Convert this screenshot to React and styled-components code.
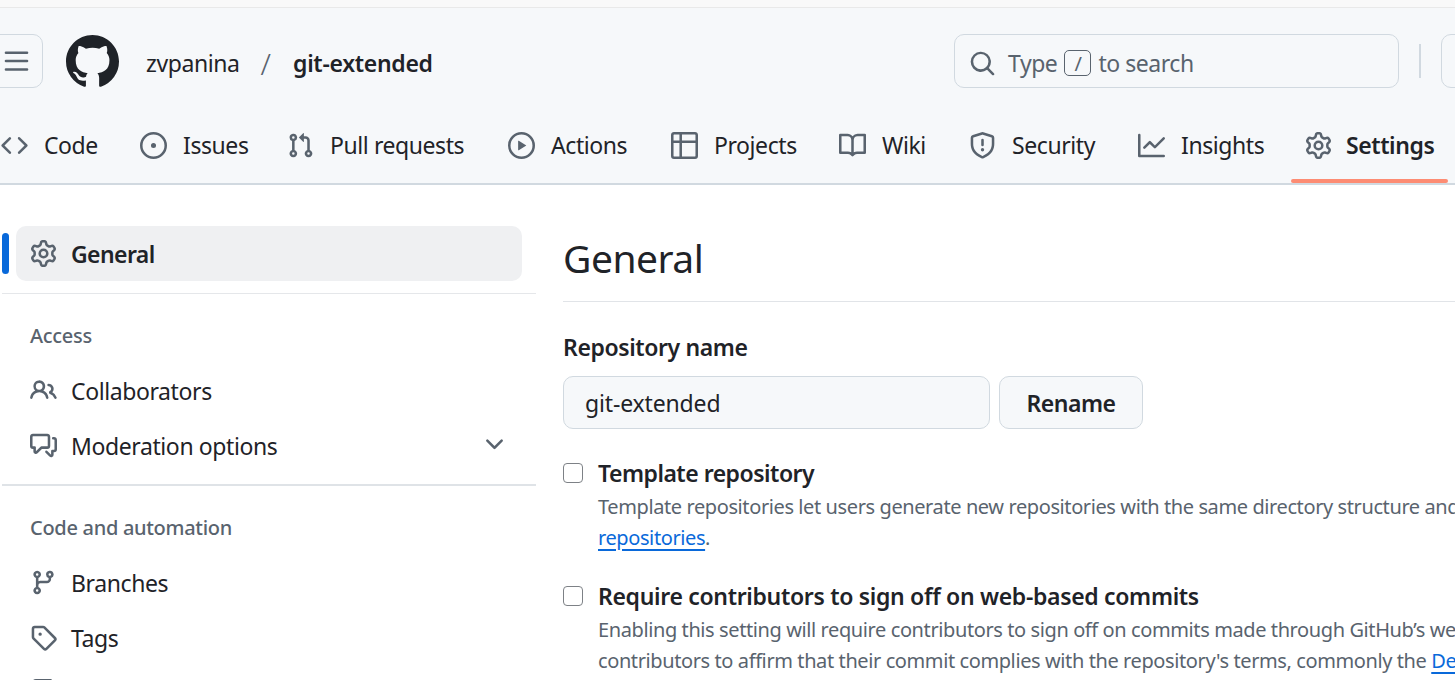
import React from "react";
import styled, { createGlobalStyle } from "styled-components";

const GlobalStyle = createGlobalStyle`
  html, body {
    margin: 0;
    padding: 0;
    background: #fff;
    overflow: hidden;
  }
  body {
    font-family: "Noto Sans", "Open Sans", sans-serif;
    color: #1f2328;
  }
`;

const paths = {
  menu: "M1 2.75A.75.75 0 0 1 1.75 2h12.5a.75.75 0 0 1 0 1.5H1.75A.75.75 0 0 1 1 2.75Zm0 5A.75.75 0 0 1 1.75 7h12.5a.75.75 0 0 1 0 1.5H1.75A.75.75 0 0 1 1 7.75ZM1.75 12h12.5a.75.75 0 0 1 0 1.5H1.75a.75.75 0 0 1 0-1.5Z",
  mark: "M8 0c4.42 0 8 3.58 8 8a8.013 8.013 0 0 1-5.45 7.59c-.4.08-.55-.17-.55-.38 0-.27.01-1.13.01-2.2 0-.75-.25-1.23-.54-1.48 1.78-.2 3.65-.88 3.65-3.95 0-.88-.31-1.59-.82-2.15.08-.2.36-1.02-.08-2.12 0 0-.67-.22-2.2.82-.64-.18-1.32-.27-2-.27-.68 0-1.36.09-2 .27-1.53-1.03-2.2-.82-2.2-.82-.44 1.1-.16 1.92-.08 2.12-.51.56-.82 1.28-.82 2.15 0 3.06 1.86 3.75 3.64 3.95-.23.2-.44.55-.51 1.07-.46.21-1.61.55-2.33-.66-.15-.24-.6-.83-1.23-.82-.67.01-.27.38.01.53.34.19.73.9.82 1.13.16.45.68 1.31 2.69.94 0 .67.01 1.3.01 1.49 0 .21-.15.45-.55.38A7.995 7.995 0 0 1 0 8c0-4.42 3.58-8 8-8Z",
  search: "M10.68 11.74a6 6 0 0 1-7.922-8.982 6 6 0 0 1 8.982 7.922l3.04 3.04a.749.749 0 0 1-.326 1.275.749.749 0 0 1-.734-.215ZM11.5 7a4.499 4.499 0 1 0-8.997 0A4.499 4.499 0 0 0 11.5 7Z",
  code: "m11.28 3.22 4.25 4.25a.75.75 0 0 1 0 1.06l-4.25 4.25a.749.749 0 0 1-1.275-.326.749.749 0 0 1 .215-.734L13.94 8l-3.72-3.72a.749.749 0 0 1 .326-1.275.749.749 0 0 1 .734.215Zm-6.56 0a.751.751 0 0 1 1.042.018.751.751 0 0 1 .018 1.042L2.06 8l3.72 3.72a.749.749 0 0 1-.326 1.275.749.749 0 0 1-.734-.215L.47 8.53a.75.75 0 0 1 0-1.06Z",
  issue: "M8 9.5a1.5 1.5 0 1 0 0-3 1.5 1.5 0 0 0 0 3ZM8 0a8 8 0 1 1 0 16A8 8 0 0 1 8 0ZM1.5 8a6.5 6.5 0 1 0 13 0 6.5 6.5 0 0 0-13 0Z",
  pull: "M1.5 3.25a2.25 2.25 0 1 1 3 2.122v5.256a2.251 2.251 0 1 1-1.5 0V5.372A2.25 2.25 0 0 1 1.5 3.25Zm5.677-.177L9.573.677A.25.25 0 0 1 10 .854V2.5h1A2.5 2.5 0 0 1 13.5 5v5.628a2.251 2.251 0 1 1-1.5 0V5a1 1 0 0 0-1-1h-1v1.646a.25.25 0 0 1-.427.177L7.177 3.427a.25.25 0 0 1 0-.354ZM3.75 2.5a.75.75 0 1 0 0 1.5.75.75 0 0 0 0-1.5Zm0 9.5a.75.75 0 1 0 0 1.5.75.75 0 0 0 0-1.5Zm8.25.75a.75.75 0 1 0 1.5 0 .75.75 0 0 0-1.5 0Z",
  play: "M8 0a8 8 0 1 1 0 16A8 8 0 0 1 8 0ZM1.5 8a6.5 6.5 0 1 0 13 0 6.5 6.5 0 0 0-13 0Zm4.879-2.773 4.264 2.559a.25.25 0 0 1 0 .428l-4.264 2.559A.25.25 0 0 1 6 10.559V5.442a.25.25 0 0 1 .379-.215Z",
  table: "M0 1.75C0 .784.784 0 1.75 0h12.5C15.216 0 16 .784 16 1.75v12.5A1.75 1.75 0 0 1 14.25 16H1.75A1.75 1.75 0 0 1 0 14.25ZM6.5 6.5v8h7.75a.25.25 0 0 0 .25-.25V6.5Zm8-1.5V1.75a.25.25 0 0 0-.25-.25H6.5V5Zm-13 1.5v7.75c0 .138.112.25.25.25H5v-8ZM5 5V1.5H1.75a.25.25 0 0 0-.25.25V5Z",
  book: "M0 1.75A.75.75 0 0 1 .75 1h4.253c1.227 0 2.317.59 3 1.501A3.743 3.743 0 0 1 11.006 1h4.245a.75.75 0 0 1 .75.75v10.5a.75.75 0 0 1-.75.75h-4.507a2.25 2.25 0 0 0-1.591.659l-.622.621a.75.75 0 0 1-1.06 0l-.622-.621A2.25 2.25 0 0 0 5.258 13H.75a.75.75 0 0 1-.75-.75Zm7.251 10.324.004-5.073-.002-2.253A2.25 2.25 0 0 0 5.003 2.5H1.5v9h3.757a3.75 3.75 0 0 1 1.994.574ZM8.755 4.75l-.004 7.322a3.752 3.752 0 0 1 1.992-.572H14.5v-9h-3.495a2.25 2.25 0 0 0-2.25 2.25Z",
  shield: "M7.467.133a1.748 1.748 0 0 1 1.066 0l5.25 1.68A1.75 1.75 0 0 1 15 3.48V7c0 1.566-.32 3.182-1.303 4.682-.983 1.498-2.585 2.813-5.032 3.855a1.697 1.697 0 0 1-1.33 0c-2.447-1.042-4.049-2.357-5.032-3.855C1.32 10.182 1 8.566 1 7V3.48a1.75 1.75 0 0 1 1.217-1.667Zm.61 1.429a.25.25 0 0 0-.153 0l-5.25 1.68a.25.25 0 0 0-.174.238V7c0 1.358.275 2.666 1.057 3.86.784 1.194 2.121 2.34 4.366 3.297a.196.196 0 0 0 .154 0c2.245-.956 3.582-2.104 4.366-3.298C13.225 9.666 13.5 8.36 13.5 7V3.48a.251.251 0 0 0-.174-.237l-5.25-1.68ZM8.75 4.75v3a.75.75 0 0 1-1.5 0v-3a.75.75 0 0 1 1.5 0ZM9 10.5a1 1 0 1 1-2 0 1 1 0 0 1 2 0Z",
  graph: "M1.5 1.75V13.5h13.75a.75.75 0 0 1 0 1.5H.75a.75.75 0 0 1-.75-.75V1.75a.75.75 0 0 1 1.5 0Zm14.28 2.53-5.25 5.25a.75.75 0 0 1-1.06 0L7 7.06 4.28 9.78a.751.751 0 0 1-1.042-.018.751.751 0 0 1-.018-1.042l3.25-3.25a.75.75 0 0 1 1.06 0L10 7.94l4.72-4.72a.751.751 0 0 1 1.042.018.751.751 0 0 1 .018 1.042Z",
  gear: "M8 0a8.2 8.2 0 0 1 .701.031C9.444.095 9.99.645 10.16 1.29l.288 1.107c.018.066.079.158.212.224.231.114.454.243.668.386.123.082.233.09.299.071l1.103-.303c.644-.176 1.392.021 1.82.63.27.385.506.792.704 1.218.315.675.111 1.422-.364 1.891l-.814.806c-.049.048-.098.147-.088.294.016.257.016.515 0 .772-.01.147.038.246.088.294l.814.806c.475.469.679 1.216.364 1.891a7.977 7.977 0 0 1-.704 1.217c-.428.61-1.176.807-1.82.63l-1.102-.302c-.067-.019-.177-.011-.3.071a5.909 5.909 0 0 1-.668.386c-.133.066-.194.158-.211.224l-.29 1.106c-.168.646-.715 1.196-1.458 1.26a8.006 8.006 0 0 1-1.402 0c-.743-.064-1.289-.614-1.458-1.26l-.289-1.106c-.018-.066-.079-.158-.212-.224a5.738 5.738 0 0 1-.668-.386c-.123-.082-.233-.09-.299-.071l-1.103.303c-.644.176-1.392-.021-1.82-.63a8.12 8.12 0 0 1-.704-1.218c-.315-.675-.111-1.422.363-1.891l.815-.806c.05-.048.098-.147.088-.294a6.214 6.214 0 0 1 0-.772c.01-.147-.038-.246-.088-.294l-.815-.806C.635 6.045.431 5.298.746 4.623a7.92 7.92 0 0 1 .704-1.217c.428-.61 1.176-.807 1.82-.63l1.102.302c.067.019.177.011.3-.071.214-.143.437-.272.668-.386.133-.066.194-.158.211-.224l.29-1.106C6.009.645 6.556.095 7.299.03 7.53.01 7.764 0 8 0Zm-.571 1.525c-.036.003-.108.036-.137.146l-.289 1.105c-.147.561-.549.967-.998 1.189-.173.086-.34.183-.5.29-.417.278-.97.423-1.529.27l-1.103-.303c-.109-.03-.175.016-.195.045-.22.312-.412.644-.573.99-.014.031-.021.11.059.19l.815.806c.411.406.562.957.53 1.456a4.709 4.709 0 0 0 0 .582c.032.499-.119 1.05-.53 1.456l-.815.806c-.081.08-.073.159-.059.19.162.346.353.677.573.989.02.03.085.076.195.046l1.102-.303c.56-.153 1.113-.008 1.53.27.161.107.328.204.501.29.447.222.85.629.997 1.189l.289 1.105c.029.109.101.143.137.146a6.6 6.6 0 0 0 1.142 0c.036-.003.108-.036.137-.146l.289-1.105c.147-.561.549-.967.998-1.189.173-.086.34-.183.5-.29.417-.278.97-.423 1.529-.27l1.103.303c.109.029.175-.016.195-.045.22-.313.411-.644.573-.99.014-.031.021-.11-.059-.19l-.815-.806c-.411-.406-.562-.957-.53-1.456a4.709 4.709 0 0 0 0-.582c-.032-.499.119-1.05.53-1.456l.815-.806c.081-.08.073-.159.059-.19a6.464 6.464 0 0 0-.573-.989c-.02-.03-.085-.076-.195-.046l-1.102.303c-.56.153-1.113.008-1.53-.27a4.44 4.44 0 0 0-.501-.29c-.447-.222-.85-.629-.997-1.189l-.289-1.105c-.029-.11-.101-.143-.137-.146a6.6 6.6 0 0 0-1.142 0ZM11 8a3 3 0 1 1-6 0 3 3 0 0 1 6 0ZM9.5 8a1.5 1.5 0 1 0-3.001.001A1.5 1.5 0 0 0 9.5 8Z",
  people: "M2 5.5a3.5 3.5 0 1 1 5.898 2.549 5.508 5.508 0 0 1 3.034 4.084.75.75 0 1 1-1.482.235 4 4 0 0 0-7.9 0 .75.75 0 0 1-1.482-.236A5.507 5.507 0 0 1 3.102 8.05 3.493 3.493 0 0 1 2 5.5ZM11 4a3.001 3.001 0 0 1 2.22 5.018 5.01 5.01 0 0 1 2.56 3.012.749.749 0 0 1-.885.954.752.752 0 0 1-.549-.514 3.507 3.507 0 0 0-2.522-2.372.75.75 0 0 1-.574-.73v-.352a.75.75 0 0 1 .416-.672A1.5 1.5 0 0 0 11 5.5.75.75 0 0 1 11 4Zm-5.5-.5a2 2 0 1 0-.001 3.999A2 2 0 0 0 5.5 3.5Z",
  comments: "M1.75 1h8.5c.966 0 1.75.784 1.75 1.75v5.5A1.75 1.75 0 0 1 10.25 10H7.061l-2.574 2.573A1.458 1.458 0 0 1 2 11.543V10h-.25A1.75 1.75 0 0 1 0 8.25v-5.5C0 1.784.784 1 1.75 1ZM1.5 2.75v5.5c0 .138.112.25.25.25h1a.75.75 0 0 1 .75.75v2.19l2.72-2.72a.749.749 0 0 1 .53-.22h3.5a.25.25 0 0 0 .25-.25v-5.5a.25.25 0 0 0-.25-.25h-8.5a.25.25 0 0 0-.25.25Zm13 2a.25.25 0 0 0-.25-.25h-.5a.75.75 0 0 1 0-1.5h.5c.966 0 1.75.784 1.75 1.75v5.5A1.75 1.75 0 0 1 14.25 12H14v1.543a1.458 1.458 0 0 1-2.487 1.03L9.22 12.28a.749.749 0 0 1 .326-1.275.749.749 0 0 1 .734.215l2.22 2.22v-2.19a.75.75 0 0 1 .75-.75h1a.25.25 0 0 0 .25-.25Z",
  chevron: "M12.78 5.22a.749.749 0 0 1 0 1.06l-4.25 4.25a.749.749 0 0 1-1.06 0L3.22 6.28a.749.749 0 1 1 1.06-1.06L8 8.939l3.72-3.719a.749.749 0 0 1 1.06 0Z",
  branch: "M9.5 3.25a2.25 2.25 0 1 1 3 2.122V6A2.5 2.5 0 0 1 10 8.5H6a1 1 0 0 0-1 1v1.128a2.251 2.251 0 1 1-1.5 0V5.372a2.25 2.25 0 1 1 1.5 0v1.836A2.493 2.493 0 0 1 6 7h4a1 1 0 0 0 1-1v-.628A2.25 2.25 0 0 1 9.5 3.25Zm-6 0a.75.75 0 1 0 1.5 0 .75.75 0 0 0-1.5 0Zm8.25-.75a.75.75 0 1 0 0 1.5.75.75 0 0 0 0-1.5ZM4.25 12a.75.75 0 1 0 0 1.5.75.75 0 0 0 0-1.5Z",
  tag: "M1 7.775V2.75C1 1.784 1.784 1 2.75 1h5.025c.464 0 .91.184 1.238.513l6.25 6.25a1.75 1.75 0 0 1 0 2.474l-5.026 5.026a1.75 1.75 0 0 1-2.474 0l-6.25-6.25A1.752 1.752 0 0 1 1 7.775Zm1.5 0c0 .066.026.13.073.177l6.25 6.25a.25.25 0 0 0 .354 0l5.025-5.025a.25.25 0 0 0 0-.354l-6.25-6.25a.25.25 0 0 0-.177-.073H2.75a.25.25 0 0 0-.25.25ZM6 5a1 1 0 1 1 0 2 1 1 0 0 1 0-2Z",
  repoPush: "M1 2.5A2.5 2.5 0 0 1 3.5 0h8.75a.75.75 0 0 1 .75.75v3.5a.75.75 0 0 1-1.5 0V1.5h-8a1 1 0 0 0-1 1v6.708A2.493 2.493 0 0 1 3.5 9h3.25a.75.75 0 0 1 0 1.5H3.5a1 1 0 0 0 0 2h5.75a.75.75 0 0 1 0 1.5H3.5A2.5 2.5 0 0 1 1 11.5Zm13.23 7.79h-.001l-1.224-1.224v6.184a.75.75 0 0 1-1.5 0V9.066L10.28 10.29a.75.75 0 0 1-1.06-1.061l2.505-2.504a.75.75 0 0 1 1.06 0L15.29 9.23a.751.751 0 0 1-.018 1.042.751.751 0 0 1-1.042.018Z",
};

const Icon = ({ name, size = 27 }) => (
  <svg width={size} height={size} viewBox="0 0 16 16" fill="currentColor" aria-hidden="true">
    <path d={paths[name]} />
  </svg>
);

const Page = styled.div`
  width: 1455px;
  height: 680px;
  overflow: hidden;
`;

const BrowserEdge = styled.div`
  height: 7px;
  background: #f9f9f9;
  border-bottom: 1px solid #e9e9e9;
`;

const Header = styled.header`
  height: 177px;
  box-sizing: border-box;
  background: #f6f8fa;
  border-bottom: 2px solid #d1d9e0;
  overflow: hidden;
`;

const TopRow = styled.div`
  display: flex;
  align-items: center;
  height: 54px;
  margin-top: 26px;
`;

const MenuButton = styled.div`
  flex: none;
  width: 53px;
  height: 54px;
  margin-left: -10px;
  box-sizing: border-box;
  display: flex;
  align-items: center;
  justify-content: flex-end;
  padding-right: 12px;
  border: 1px solid #d1d9e0;
  border-radius: 10px;
  color: #59636e;
`;

const Logo = styled.div`
  flex: none;
  display: flex;
  margin-left: 23px;
  color: #1f2328;
`;

const Owner = styled.span`
  margin-left: 27px;
  padding-top: 4px;
  font-size: 23px;
  letter-spacing: -0.4px;
`;

const Slash = styled.span`
  margin-left: 21px;
  padding-top: 4px;
  font-size: 30px;
  font-weight: 300;
  color: #59636e;
`;

const RepoName = styled.span`
  margin-left: 22px;
  padding-top: 4px;
  font-size: 23px;
  font-weight: 600;
  letter-spacing: -0.3px;
`;

const Search = styled.div`
  flex: none;
  width: 445px;
  height: 54px;
  margin-left: auto;
  box-sizing: border-box;
  display: flex;
  align-items: center;
  padding: 4px 0 0 14px;
  border: 1px solid #d1d9e0;
  border-radius: 10px;
  color: #59636e;
  font-size: 23px;
  letter-spacing: -0.45px;
`;

const SearchText = styled.span`
  margin-left: 12px;
`;

const Kbd = styled.span`
  width: 27px;
  height: 26px;
  margin: 0 7px;
  box-sizing: border-box;
  display: flex;
  align-items: center;
  justify-content: center;
  border: 1px solid #59636e;
  border-radius: 5px;
  font-size: 20px;
`;

const Divider = styled.div`
  flex: none;
  width: 2px;
  height: 34px;
  margin-left: 20px;
  background: #d1d9e0;
`;

const NextButton = styled.div`
  flex: none;
  width: 60px;
  height: 54px;
  margin-left: 20px;
  margin-right: -46px;
  box-sizing: border-box;
  border: 1px solid #d1d9e0;
  border-radius: 10px;
`;

const Tabs = styled.nav`
  display: flex;
  gap: 14px;
  height: 65px;
  margin: 30px 0 0 -13px;
`;

const Tab = styled.div`
  flex: none;
  position: relative;
  width: ${(p) => p.$w}px;
  box-sizing: border-box;
  display: flex;
  align-items: center;
  gap: ${(p) => (p.$active ? 14 : 16)}px;
  padding: 0 0 11px 14px;
  font-size: 23px;
  letter-spacing: -0.42px;
  font-weight: ${(p) => (p.$active ? 600 : 400)};
  white-space: nowrap;
  color: #1f2328;
  svg {
    flex: none;
    color: #59636e;
  }
  ${(p) =>
    p.$active &&
    `&::after {
      content: "";
      position: absolute;
      left: 0;
      right: 0;
      bottom: 0;
      height: 4px;
      border-radius: 2px;
      background: #fd8c73;
    }`}
`;

const Body = styled.div`
  display: flex;
  padding-top: 41px;
`;

const Sidebar = styled.aside`
  flex: none;
  width: 534px;
  margin-left: 2px;
`;

const NavItem = styled.div`
  position: relative;
  height: 55px;
  margin-left: 14px;
  width: 506px;
  box-sizing: border-box;
  display: flex;
  align-items: center;
  gap: 14px;
  padding: 0 14px;
  border-radius: 10px;
  background: ${(p) => (p.$active ? "#eff0f2" : "transparent")};
  font-size: 23px;
  letter-spacing: ${(p) => (p.$active ? "-0.6px" : "-0.4px")};
  font-weight: ${(p) => (p.$active ? 600 : 400)};
  color: #1f2328;
  svg {
    flex: none;
    color: #59636e;
  }
  ${(p) =>
    p.$active &&
    `&::before {
      content: "";
      position: absolute;
      left: -14px;
      top: 7px;
      width: 7px;
      height: 41px;
      border-radius: 4px;
      background: #0969da;
    }`}
`;

const Chevron = styled.span`
  display: flex;
  margin-left: auto;
  margin-bottom: 2px;
`;

const NavRule = styled.hr`
  margin: ${(p) => p.$top}px 0 0;
  border: 0;
  height: ${(p) => p.$h}px;
  background: ${(p) => p.$color};
`;

const NavHeading = styled.div`
  margin: 25px 0 10px 28px;
  height: 34px;
  line-height: 34px;
  font-size: 20px;
  font-weight: 500;
  letter-spacing: -0.3px;
  color: #59636e;
`;

const Main = styled.main`
  flex: 1;
  min-width: 0;
  margin-left: 27px;
`;

const Title = styled.h1`
  margin: 0;
  height: 75px;
  line-height: 64px;
  font-size: 39px;
  font-weight: 400;
  letter-spacing: -0.5px;
  border-bottom: 1px solid #e1e4e8;
`;

const FieldLabel = styled.div`
  margin-top: 29px;
  line-height: 32px;
  font-size: 23px;
  font-weight: 600;
  letter-spacing: -0.4px;
`;

const NameRow = styled.div`
  display: flex;
  gap: 9px;
  margin-top: 13px;
`;

const NameInput = styled.div`
  width: 427px;
  height: 53px;
  box-sizing: border-box;
  display: flex;
  align-items: center;
  padding-left: 21px;
  background: #f6f8fa;
  border: 1px solid #d1d9e0;
  border-radius: 10px;
  font-size: 23px;
  letter-spacing: -0.15px;
`;

const RenameButton = styled.button`
  width: 144px;
  height: 53px;
  padding: 0;
  background: #f6f8fa;
  border: 1px solid #d1d9e0;
  border-radius: 10px;
  font-family: inherit;
  font-size: 23px;
  font-weight: 600;
  letter-spacing: -0.5px;
  color: #1f2328;
`;

const CheckRow = styled.div`
  display: flex;
  gap: 15px;
  margin-top: ${(p) => p.$top}px;
`;

const Checkbox = styled.input.attrs({ type: "checkbox" })`
  appearance: none;
  flex: none;
  width: 20px;
  height: 20px;
  margin: 5px 0 0;
  background: #fff;
  border: 1px solid #7d8186;
  border-radius: 4px;
`;

const CheckBody = styled.div`
  min-width: 0;
  white-space: nowrap;
`;

const CheckTitle = styled.div`
  line-height: 30px;
  font-size: 23px;
  font-weight: 600;
  letter-spacing: ${(p) => p.$spacing}px;
`;

const Note = styled.div`
  margin-top: 3px;
  line-height: 31px;
  font-size: 20px;
  letter-spacing: -0.4px;
  color: #59636e;
`;

const Link = styled.a`
  color: #0969da;
  text-decoration: underline;
  text-decoration-thickness: 1.5px;
  text-underline-offset: 4px;
`;

const tabs = [
  { label: "Code", icon: "code", w: 125 },
  { label: "Issues", icon: "issue", w: 133 },
  { label: "Pull requests", icon: "pull", w: 207 },
  { label: "Actions", icon: "play", w: 149 },
  { label: "Projects", icon: "table", w: 154 },
  { label: "Wiki", icon: "book", w: 116 },
  { label: "Security", icon: "shield", w: 155 },
  { label: "Insights", icon: "graph", w: 153 },
  { label: "Settings", icon: "gear", w: 157, active: true },
];

const App = () => {
  return (
    <Page>
      <GlobalStyle />
      <BrowserEdge />
      <Header>
        <TopRow>
          <MenuButton>
            <Icon name="menu" />
          </MenuButton>
          <Logo>
            <Icon name="mark" size={53} />
          </Logo>
          <Owner>zvpanina</Owner>
          <Slash>/</Slash>
          <RepoName>git-extended</RepoName>
          <Search>
            <Icon name="search" />
            <SearchText>Type</SearchText>
            <Kbd>/</Kbd>
            <span>to search</span>
          </Search>
          <Divider />
          <NextButton />
        </TopRow>
        <Tabs>
          {tabs.map((t) => (
            <Tab key={t.label} $w={t.w} $active={t.active}>
              <Icon name={t.icon} />
              {t.label}
            </Tab>
          ))}
        </Tabs>
      </Header>
      <Body>
        <Sidebar>
          <NavItem $active>
            <Icon name="gear" />
            General
          </NavItem>
          <NavRule $top={12} $h={1} $color="#e5e7ea" />
          <NavHeading>Access</NavHeading>
          <NavItem>
            <Icon name="people" />
            Collaborators
          </NavItem>
          <NavItem>
            <Icon name="comments" />
            Moderation options
            <Chevron>
              <Icon name="chevron" />
            </Chevron>
          </NavItem>
          <NavRule $top={11} $h={2} $color="#dfe3e7" />
          <NavHeading>Code and automation</NavHeading>
          <NavItem>
            <Icon name="branch" />
            Branches
          </NavItem>
          <NavItem>
            <Icon name="tag" />
            Tags
          </NavItem>
          <NavItem>
            <Icon name="repoPush" />
            Rules
          </NavItem>
        </Sidebar>
        <Main>
          <Title>General</Title>
          <FieldLabel>Repository name</FieldLabel>
          <NameRow>
            <NameInput>git-extended</NameInput>
            <RenameButton>Rename</RenameButton>
          </NameRow>
          <CheckRow $top={29}>
            <Checkbox />
            <CheckBody>
              <CheckTitle $spacing={-0.5}>Template repository</CheckTitle>
              <Note>
                Template repositories let users generate new repositories with the same directory structure and files.
                <br />
                <Link>repositories</Link>.
              </Note>
            </CheckBody>
          </CheckRow>
          <CheckRow $top={28}>
            <Checkbox />
            <CheckBody>
              <CheckTitle $spacing={-0.32}>Require contributors to sign off on web-based commits</CheckTitle>
              <Note>
                Enabling this setting will require contributors to sign off on commits made through GitHub’s web interface.
                <br />
                contributors to affirm that their commit complies with the repository's terms, commonly the <Link>Developer</Link>
              </Note>
            </CheckBody>
          </CheckRow>
        </Main>
      </Body>
    </Page>
  );
};

export default App;
